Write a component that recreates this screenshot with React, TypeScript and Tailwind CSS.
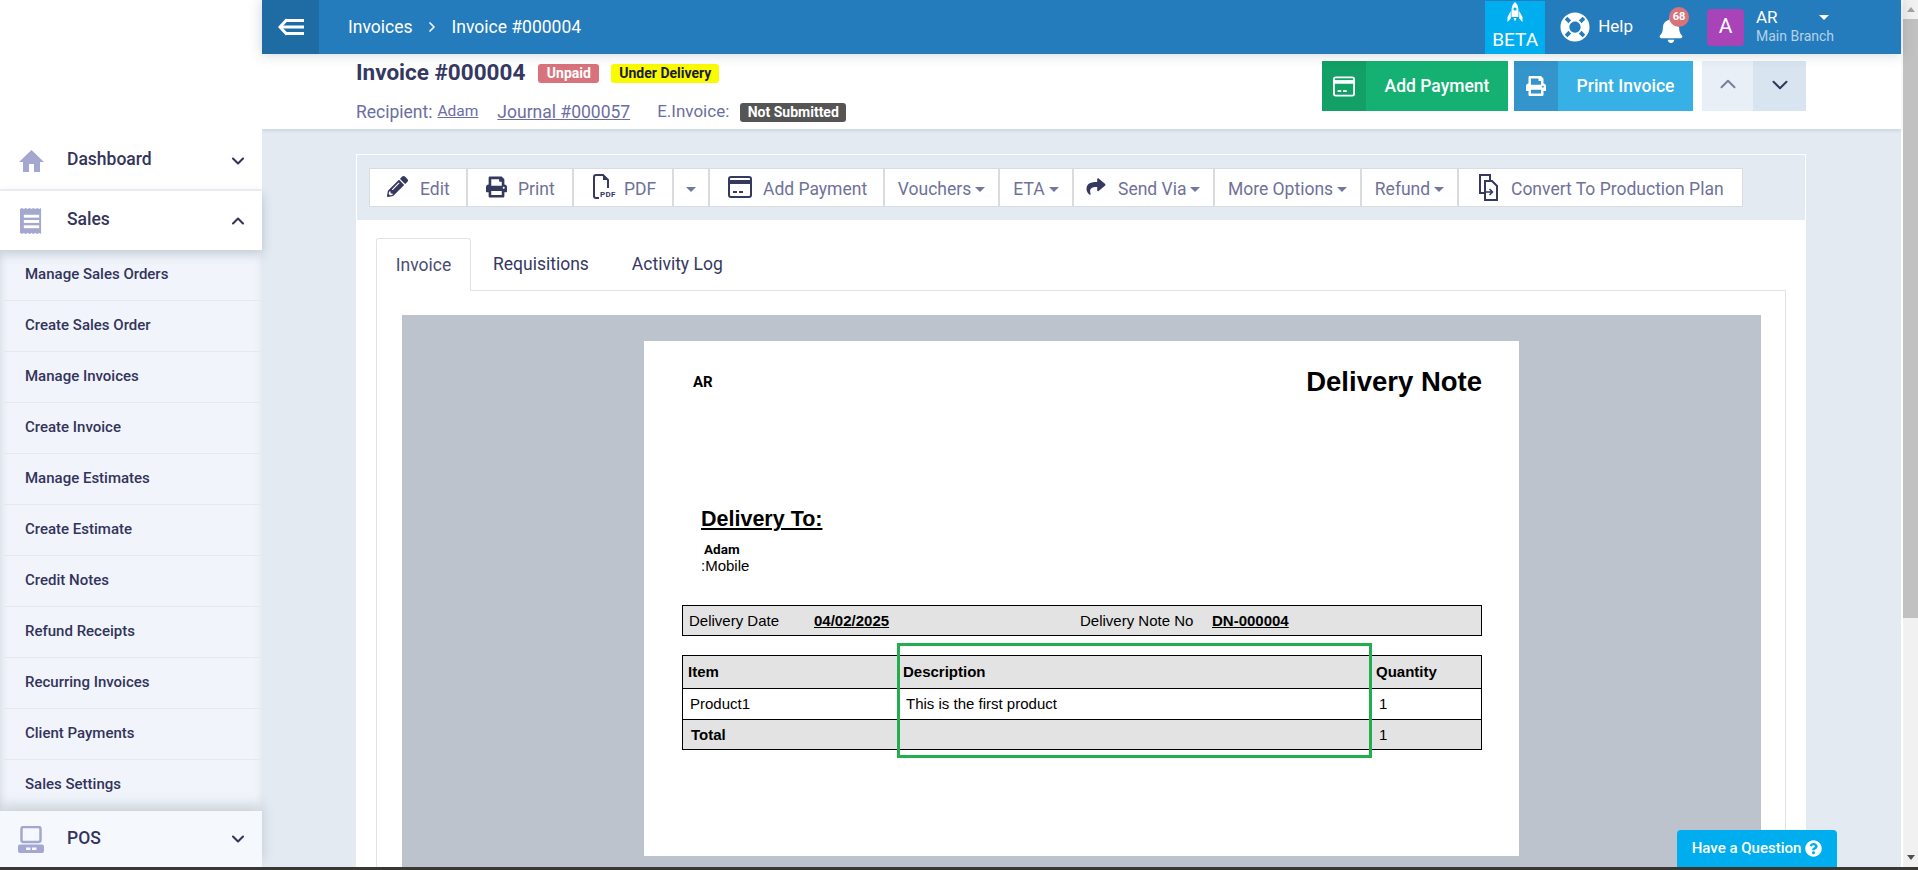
import React from 'react';
import { ChevronDown, ChevronUp, ChevronRight } from 'lucide-react';
import { FaBell, FaLifeRing, FaPencilAlt, FaPrint, FaQuestionCircle, FaShare } from 'react-icons/fa';

const subItems = [
  'Manage Sales Orders',
  'Create Sales Order',
  'Manage Invoices',
  'Create Invoice',
  'Manage Estimates',
  'Create Estimate',
  'Credit Notes',
  'Refund Receipts',
  'Recurring Invoices',
  'Client Payments',
  'Sales Settings',
];

const Caret: React.FC<{ className?: string }> = ({ className = 'border-t-[#74769c]' }) => (
  <span className={`inline-block w-0 h-0 border-x-[5px] border-x-transparent border-t-[5px] ${className}`} />
);

const CardIcon: React.FC<{ className?: string }> = ({ className }) => (
  <svg viewBox="0 0 24 22" className={className} fill="none">
    <rect x="1" y="1" width="22" height="20" rx="2" stroke="currentColor" strokeWidth="2" />
    <rect x="1" y="4" width="22" height="4" fill="currentColor" />
    <rect x="5" y="15" width="4" height="2" fill="currentColor" />
    <rect x="11" y="15" width="4" height="2" fill="currentColor" />
  </svg>
);

const HomeIcon = () => (
  <svg viewBox="0 0 25 22" className="w-[25px] h-[22px]" fill="#a4a7d0">
    <path d="M12.500 0L25 12h-4v10h-6v-8h-5v8H4V12H0z" />
  </svg>
);

const ReceiptIcon = () => (
  <svg viewBox="0 0 24 27" className="w-[23px] h-[26px]">
    <path
      d="M0 1l2-1 2 1 2-1 2 1 2-1 2 1 2-1 2 1 2-1 2 1 2-1v27l-2-1-2 1-2-1-2 1-2-1-2 1-2-1-2 1-2-1-2 1-2-1z"
      fill="#a4a7d0"
    />
    <rect x="4" y="7" width="16" height="3" fill="#fff" />
    <rect x="4" y="12.500" width="16" height="3" fill="#fff" />
    <rect x="4" y="18" width="16" height="3" fill="#fff" />
  </svg>
);

const PosIcon = () => (
  <svg viewBox="0 0 26 27" className="w-[26px] h-[27px]" fill="none">
    <rect x="3.500" y="1" width="19" height="15" rx="2" stroke="#a4a7d0" strokeWidth="2.500" />
    <rect x="0" y="18.500" width="26" height="8.500" rx="2" fill="#a4a7d0" />
    <rect x="8" y="21.500" width="4.500" height="2.500" fill="#f5f9fd" />
    <rect x="14" y="21.500" width="4.500" height="2.500" fill="#f5f9fd" />
  </svg>
);

const BackIcon = () => (
  <svg viewBox="0 0 26 18" className="w-[26px] h-[18px]" fill="none" stroke="#fff" strokeWidth="3">
    <path d="M9 1.500L2 9l7 7.500" />
    <path d="M8 2.500h18M3 9h23M8 15.500h18" />
  </svg>
);

const RocketIcon = () => (
  <svg viewBox="0 0 16 20" className="w-[16px] h-[20px]" fill="#fff">
    <path d="M8 0c3 2.500 3.500 6 3.500 9v6h-7V9c0-3 .5-6.500 3.500-9z" />
    <path d="M3.800 9L.5 15v5l3.300-3.500zM12.200 9l3.300 6v5l-3.300-3.500z" />
    <path d="M6.500 16h3L8 19.500z" />
    <circle cx="8" cy="7" r="1.600" fill="#00aeef" />
  </svg>
);

const PdfIcon = () => (
  <span className="relative w-[21px] h-[26px] block">
    <svg viewBox="0 0 16 26" className="absolute left-0 top-0 w-[16px] h-[26px]" fill="none">
      <path d="M6 24H3a2 2 0 0 1-2-2V3a2 2 0 0 1 2-2h7l5 5v8" stroke="#35385f" strokeWidth="2" />
      <path d="M10 1v5h5z" fill="#35385f" />
    </svg>
    <span className="absolute left-[7px] top-[16px] text-[8px] leading-[10px] font-bold text-[#35385f] tracking-[0.3px]">PDF</span>
  </span>
);

const ConvertIcon = () => (
  <svg viewBox="0 0 20 28" className="w-[20px] h-[28px]" fill="none" stroke="#35385f" strokeWidth="2">
    <path d="M6 20H2V2h10v5" />
    <path d="M7 8h7l5 5v14H7z" />
    <path d="M7 19h7M11.500 16l3 3-3 3" strokeWidth="1.500" />
  </svg>
);

const toolBtn = 'h-[39px] flex items-center bg-white border border-[#d9dbde] text-[#6f7298] text-[17.500px] shrink-0';
const rowText = 'text-[17.500px] font-medium text-[#33345c] flex-1 pb-[2px]';

const Sidebar = () => (
  <aside className="w-[262px] shrink-0 bg-white flex flex-col relative z-10">
    <div className="h-[132px] shrink-0" />
    <div className="h-[59px] flex items-center border-b-2 border-[#f1f3f6] shrink-0">
      <span className="ml-[19px] flex"><HomeIcon /></span>
      <span className={`ml-[23px] ${rowText}`}>Dashboard</span>
      <ChevronDown className="mr-[14px] text-[#33345c]" size={20} strokeWidth={2.500} />
    </div>
    <div className="h-[59px] flex items-center shrink-0 relative z-10 shadow-[0_4px_10px_rgba(60,70,90,0.25)]">
      <span className="ml-[20px] flex"><ReceiptIcon /></span>
      <span className={`ml-[24px] ${rowText}`}>Sales</span>
      <ChevronUp className="mr-[14px] text-[#33345c]" size={20} strokeWidth={2.500} />
    </div>
    <div className="bg-[#f1f5fb] shrink-0 shadow-[inset_8px_0_8px_-8px_rgba(60,70,90,0.2),inset_-8px_0_8px_-8px_rgba(60,70,90,0.12)]">
      {subItems.map((item, i) => (
        <div
          key={item}
          className={`h-[51px] flex items-center pl-[25px] pb-[1px] text-[15px] font-medium text-[#33345c] border-b ${i === subItems.length - 1 ? 'border-transparent' : 'border-[#e4e8ef]'}`}
        >
          {item}
        </div>
      ))}
    </div>
    <div className="flex-1 flex items-center bg-[#f5f9fd] relative shadow-[0_-6px_12px_rgba(60,70,90,0.2)]">
      <span className="ml-[18px] flex"><PosIcon /></span>
      <span className={`ml-[23px] ${rowText}`}>POS</span>
      <ChevronDown className="mr-[14px] text-[#33345c]" size={20} strokeWidth={2.500} />
    </div>
  </aside>
);

const TopBar = () => (
  <header className="h-[54px] shrink-0 bg-[#257cbd] flex items-center text-white relative z-20 shadow-[0_0_12px_rgba(60,70,90,0.25)]">
    <button className="w-[57px] h-full bg-[#1f6ca5] flex items-center justify-center shrink-0">
      <BackIcon />
    </button>
    <span className="ml-[29px] text-[17.500px]">Invoices</span>
    <ChevronRight className="ml-[12px]" size={16} strokeWidth={2.500} />
    <span className="ml-[11px] text-[17.500px]">Invoice #000004</span>
    <div className="ml-auto flex items-center h-full">
      <div className="w-[60px] h-[53px] mt-px bg-[#00aeef] flex flex-col items-center">
        <span className="mt-[1px] flex"><RocketIcon /></span>
        <span className="text-[19px] leading-[22px] mt-[7px]">BETA</span>
      </div>
      <FaLifeRing className="ml-[15px] w-[30px] h-[30px]" />
      <span className="ml-[8px] text-[17px]">Help</span>
      <div className="relative ml-[26px] w-[24px] h-[30px]">
        <FaBell className="w-[24px] h-[26px] mt-[5px]" />
        <span className="absolute -top-[5px] left-[10px] w-[20px] h-[20px] rounded-full bg-[#d9737b] text-[11px] font-bold flex items-center justify-center">68</span>
      </div>
      <div className="ml-[24px] w-[37px] h-[37px] rounded-[4px] bg-[#a843b8] flex items-center justify-center text-[21px]">A</div>
      <div className="ml-[12px] w-[74px] h-full flex flex-col justify-center pb-[2px]">
        <div className="flex items-center justify-between pr-[1px]">
          <span className="text-[17px] leading-[20px]">AR</span>
          <Caret className="border-t-white" />
        </div>
        <span className="text-[14px] leading-[18px] text-[#b4d2ea] whitespace-nowrap">Main Branch</span>
      </div>
      <div className="w-[71px]" />
    </div>
  </header>
);

const PageHeader = () => (
  <div className="h-[75px] shrink-0 bg-white shadow-[0_2px_3px_rgba(60,70,90,0.12)] pl-[94px] pr-[95px] flex justify-between relative z-[4]">
    <div className="flex flex-col pt-[8px]">
      <div className="flex items-center h-[22px]">
        <span className="text-[22.500px] font-bold text-[#35385f]">Invoice #000004</span>
        <span className="ml-[13px] h-[19px] w-[61px] rounded-[3px] bg-[#d9737b] text-white text-[14px] font-bold flex items-center justify-center">Unpaid</span>
        <span className="ml-[12px] h-[19px] w-[108px] rounded-[3px] bg-[#fbfb00] text-[#1c1c2c] text-[14px] font-bold flex items-center justify-center">Under Delivery</span>
      </div>
      <div className="flex items-center mt-[15px] h-[26px] text-[#6b6ea3] text-[17.500px]">
        <span>Recipient:</span>
        <span className="ml-[5px] text-[15.500px] underline">Adam</span>
        <span className="ml-[19px] underline">Journal #000057</span>
        <span className="ml-[27px] text-[17px]">E.Invoice:</span>
        <span className="ml-[11px] h-[19px] w-[106px] rounded-[3px] bg-[#555555] text-white text-[14px] font-bold flex items-center justify-center">Not Submitted</span>
      </div>
    </div>
    <div className="flex pt-[7px] h-[57px]">
      <button className="w-[186px] flex bg-[#15b173] text-white">
        <span className="w-[44px] h-full bg-[#12a066] flex items-center justify-center"><CardIcon className="w-[22px] h-[21px]" /></span>
        <span className="flex-1 text-[17.500px] font-medium flex items-center justify-center">Add Payment</span>
      </button>
      <button className="ml-[6px] w-[179px] flex bg-[#37b1e5] text-white">
        <span className="w-[44px] h-full bg-[#3395cb] flex items-center justify-center"><FaPrint className="w-[20px] h-[24px]" /></span>
        <span className="flex-1 text-[17.500px] font-medium flex items-center justify-center">Print Invoice</span>
      </button>
      <button className="ml-[9px] w-[51px] bg-[#e9eff7] flex items-center justify-center pb-[5px] text-[#7a7d9c]"><ChevronUp size={26} strokeWidth={1.800} /></button>
      <button className="w-[53px] bg-[#d9e4f1] flex items-center justify-center pb-[2px] text-[#33345c]"><ChevronDown size={26} strokeWidth={1.800} /></button>
    </div>
  </div>
);

const Toolbar = () => (
  <div className="h-[65px] bg-[#e3eaf2] pt-[13px] pl-[12px] flex">
    <button className={`${toolBtn} w-[98px]`}>
      <FaPencilAlt className="ml-[17px] w-[21px] h-[21px] -mt-[2px] text-[#35385f]" />
      <span className="ml-[12px] mt-[3px]">Edit</span>
    </button>
    <button className={`${toolBtn} w-[106px]`}>
      <FaPrint className="ml-[18px] w-[21px] h-[24px] -mt-[2px] text-[#35385f]" />
      <span className="ml-[11px] mt-[3px]">Print</span>
    </button>
    <button className={`${toolBtn} w-[100px]`}>
      <span className="ml-[19px] -mt-[2px]"><PdfIcon /></span>
      <span className="ml-[10px] mt-[3px]">PDF</span>
    </button>
    <button className={`${toolBtn} w-[36px] justify-center pt-[3px]`}><Caret /></button>
    <button className={`${toolBtn} w-[175px]`}>
      <CardIcon className="ml-[18px] w-[24px] h-[22px] -mt-[2px] text-[#35385f]" />
      <span className="ml-[11px] mt-[3px]">Add Payment</span>
    </button>
    <button className={`${toolBtn} w-[115px] justify-center gap-[4px] pt-[3px]`}>Vouchers <Caret /></button>
    <button className={`${toolBtn} w-[74px] justify-center gap-[4px] pt-[3px]`}>ETA <Caret /></button>
    <button className={`${toolBtn} w-[141px]`}>
      <FaShare className="ml-[11px] w-[22px] h-[19px] -mt-[2px] text-[#35385f]" />
      <span className="ml-[11px] mt-[3px]">Send Via</span>
      <span className="ml-[4px] mt-[3px] flex"><Caret /></span>
    </button>
    <button className={`${toolBtn} w-[147px] justify-center gap-[4px] pt-[3px]`}>More Options <Caret /></button>
    <button className={`${toolBtn} w-[97px] justify-center gap-[4px] pt-[3px]`}>Refund <Caret /></button>
    <button className={`${toolBtn} w-[285px]`}>
      <span className="ml-[19px] -mt-[2px] flex"><ConvertIcon /></span>
      <span className="ml-[13px] mt-[3px] whitespace-nowrap">Convert To Production Plan</span>
    </button>
  </div>
);

const Tabs = () => (
  <div className="pl-[19px] pr-[19px] pt-[18px] bg-white">
    <div className="flex h-[53px] border-b border-[#dfe4ea] text-[17.500px] text-[#35385f]">
      <div className="w-[95px] h-[53px] flex items-center justify-center bg-white border border-b-0 border-[#dfe4ea] rounded-t-[3px] text-[#4b4d72]">Invoice</div>
      <div className="ml-[22px] h-[53px] flex items-center">Requisitions</div>
      <div className="ml-[43px] h-[53px] flex items-center">Activity Log</div>
    </div>
  </div>
);

const cell = 'flex items-center font-["Liberation_Sans",Arial,sans-serif] text-[15px] text-black';

const DeliveryNote = () => (
  <div className="relative bg-white h-[515px] w-[875px] ml-[242px] pt-[25px] text-black">
    <div className="flex items-center justify-between pl-[49px] pr-[37px] h-[32px]">
      <span className="text-[15px] font-bold">AR</span>
      <span className='text-[27.500px] font-bold font-["Liberation_Sans",Arial,sans-serif]'>Delivery Note</span>
    </div>
    <div className='mt-[107px] ml-[57px] text-[21.500px] leading-[28px] font-bold underline font-["Liberation_Sans",Arial,sans-serif]'>Delivery To:</div>
    <div className="mt-[7px] ml-[60px] text-[13.500px] leading-[18px] font-bold">Adam</div>
    <div className='ml-[57px] -mt-[1px] text-[15px] leading-[17px] font-["Liberation_Sans",Arial,sans-serif]'>:Mobile</div>
    <div className="mt-[31px] ml-[38px] mr-[37px] h-[31px] bg-[#e3e3e3] border border-black flex items-center pl-[6px] pt-[1px]">
      <span className={`${cell} w-[125px]`}>Delivery Date</span>
      <span className={`${cell} w-[266px] font-bold underline`}>04/02/2025</span>
      <span className={`${cell} w-[132px]`}>Delivery Note No</span>
      <span className={`${cell} font-bold underline`}>DN-000004</span>
    </div>
    <div className="mt-[19px] ml-[38px] mr-[37px] border border-black">
      <div className="flex h-[33px] bg-[#e3e3e3] border-b border-black">
        <span className={`${cell} w-[216px] pl-[5px] font-bold`}>Item</span>
        <span className={`${cell} w-[477px] pl-[4px] font-bold`}>Description</span>
        <span className={`${cell} font-bold`}>Quantity</span>
      </div>
      <div className="flex h-[31px] border-b border-black">
        <span className={`${cell} w-[216px] pl-[7px]`}>Product1</span>
        <span className={`${cell} w-[477px] pl-[7px]`}>This is the first product</span>
        <span className={`${cell} pl-[3px]`}>1</span>
      </div>
      <div className="flex h-[29px] bg-[#e3e3e3] pt-[1px]">
        <span className={`${cell} w-[216px] pl-[8px] font-bold`}>Total</span>
        <span className={`${cell} w-[477px]`} />
        <span className={`${cell} pl-[3px]`}>1</span>
      </div>
    </div>
    <div className="absolute left-[253px] top-[302px] w-[475px] h-[115px] border-[3px] border-[#22ad4f]" />
  </div>
);

export default function App() {
  return (
    <div className='relative w-[1918px] h-[870px] overflow-hidden flex flex-col font-["Roboto",sans-serif] bg-[#e3eaf2]'>
      <div className="flex flex-1 min-h-0">
        <Sidebar />
        <div className="w-[1639px] shrink-0 flex flex-col bg-[#e3eaf2]">
          <TopBar />
          <PageHeader />
          <div className="ml-[94px] mr-[95px] mt-[25px] flex-1 flex flex-col bg-white border border-b-0 border-white min-h-0">
            <Toolbar />
            <Tabs />
            <div className="flex-1 mx-[19px] border-x border-[#dfe4ea] pl-[25px] pr-[24px] pt-[24px] flex min-h-0">
              <div className="flex-1 bg-[#bcc3cd] pt-[26px]">
                <DeliveryNote />
              </div>
            </div>
          </div>
        </div>
        <div className="w-[2px] bg-white shrink-0" />
        <div className="flex-1 bg-[#f1f1f1] flex flex-col items-center relative">
          <span className="mt-[7px] w-0 h-0 border-x-[4.500px] border-x-transparent border-b-[5px] border-b-[#a3a3a3]" />
          <div className="absolute top-[19px] left-0 right-0 h-[599px] bg-[#c1c1c1]" />
          <span className="mt-auto mb-[7px] w-0 h-0 border-x-[4.500px] border-x-transparent border-t-[5px] border-t-[#505050]" />
        </div>
      </div>
      <div className="h-[3px] bg-[#3a3733] shrink-0" />
      <button className="absolute right-[81px] bottom-[3px] w-[160px] h-[37px] rounded-t-[4px] bg-[#00aeef] text-white text-[15px] font-medium flex items-center justify-center gap-[4px] z-20">
        Have a Question
        <FaQuestionCircle className="w-[17px] h-[17px]" />
      </button>
    </div>
  );
}
